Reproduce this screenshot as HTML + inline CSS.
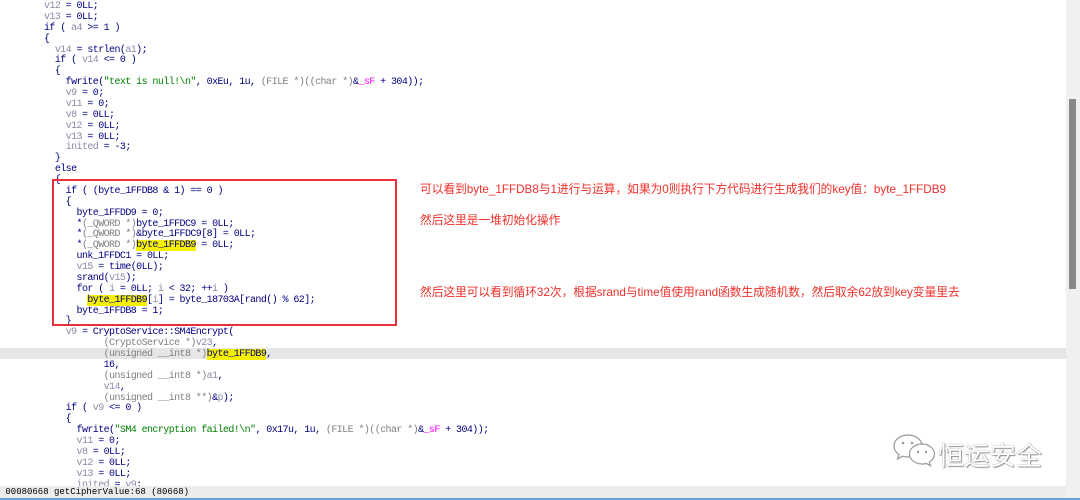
<!DOCTYPE html>
<html><head><meta charset="utf-8"><style>
body{margin:0;width:1080px;height:500px;overflow:hidden;background:#fff;position:relative;font-family:"Liberation Mono",monospace;}
#code{position:absolute;left:44px;top:2px;font-size:10px;letter-spacing:-0.58px;line-height:10.87px;white-space:pre;color:#000080;}
.v{color:#8a8aa8}.s{color:#008000}.g{color:#808080}.p{color:#ff00ff}.h{background:#f5f000}
#hl{position:absolute;left:0;top:348px;width:1066px;height:11px;background:#e6e6e6}
#box{position:absolute;left:52px;top:179px;width:341px;height:143px;border:2px solid #e8303a}
.n{position:absolute;left:420px;color:#f0302a;font-family:"Liberation Sans","Noto Sans CJK SC",sans-serif;font-size:11.7px}
#sb{position:absolute;left:1066px;top:0;width:14px;height:500px;background:#f0f0f0}
#th{position:absolute;left:1069px;top:99px;width:7px;height:190px;background:#888}
#st{position:absolute;left:0;top:486px;width:1066px;height:13px;background:#ececec;font-size:9px;line-height:13px;color:#000;white-space:pre}
#bl{position:absolute;left:0;top:498px;width:1080px;height:2px;background:#6a9fd0}
#wm{position:absolute;left:938px;top:436px;color:#fff;font-family:"Noto Sans CJK SC",sans-serif;font-size:26px;text-shadow:0 0 1px #666,1px 1px 1px #999;}
</style></head><body>
<div id="hl"></div>
<div id="code"><span class="v">v12</span> = 0LL;
<span class="v">v13</span> = 0LL;
if ( <span class="v">a4</span> &gt;= 1 )
{
  <span class="v">v14</span> = strlen(<span class="v">a1</span>);
  if ( <span class="v">v14</span> &lt;= 0 )
  {
    fwrite(<span class="s">"text is null!\n"</span>, 0xEu, 1u, <span class="g">(FILE *)((char *)</span>&amp;<span class="p">_sF</span> + 304));
    <span class="v">v9</span> = 0;
    <span class="v">v11</span> = 0;
    <span class="v">v8</span> = 0LL;
    <span class="v">v12</span> = 0LL;
    <span class="v">v13</span> = 0LL;
    <span class="v">inited</span> = -3;
  }
  else
  {
    if ( (byte_1FFDB8 &amp; 1) == 0 )
    {
      byte_1FFDD9 = 0;
      *<span class="g">(_QWORD *)</span>byte_1FFDC9 = 0LL;
      *<span class="g">(_QWORD *)</span>&amp;byte_1FFDC9[8] = 0LL;
      *<span class="g">(_QWORD *)</span><span class="h">byte_1FFDB9</span> = 0LL;
      unk_1FFDC1 = 0LL;
      <span class="v">v15</span> = time(0LL);
      srand(<span class="v">v15</span>);
      for ( <span class="v">i</span> = 0LL; <span class="v">i</span> &lt; 32; ++<span class="v">i</span> )
        <span class="h">byte_1FFDB9</span>[<span class="v">i</span>] = byte_18703A[rand() % 62];
      byte_1FFDB8 = 1;
    }
    <span class="v">v9</span> = CryptoService::SM4Encrypt(
           <span class="g">(CryptoService *)</span><span class="v">v23</span>,
           <span class="g">(unsigned __int8 *)</span><span class="h">byte_1FFDB9</span>,
           16,
           <span class="g">(unsigned __int8 *)</span><span class="v">a1</span>,
           <span class="v">v14</span>,
           <span class="g">(unsigned __int8 **)</span>&amp;<span class="v">p</span>);
    if ( <span class="v">v9</span> &lt;= 0 )
    {
      fwrite(<span class="s">"SM4 encryption failed!\n"</span>, 0x17u, 1u, <span class="g">(FILE *)((char *)</span>&amp;<span class="p">_sF</span> + 304));
      <span class="v">v11</span> = 0;
      <span class="v">v8</span> = 0LL;
      <span class="v">v12</span> = 0LL;
      <span class="v">v13</span> = 0LL;
      <span class="v">inited</span> = <span class="v">v9</span>;</div>
<div id="box"></div>
<div class="n" style="top:180px">可以看到byte_1FFDB8与1进行与运算，如果为0则执行下方代码进行生成我们的key值：byte_1FFDB9</div>
<div class="n" style="top:211px">然后这里是一堆初始化操作</div>
<div class="n" style="top:283px">然后这里可以看到循环32次，根据srand与time值使用rand函数生成随机数，然后取余62放到key变量里去</div>
<div id="sb"></div><div id="th"></div>
<svg style="position:absolute;left:892px;top:432px" width="46" height="38" viewBox="0 0 46 38">
<g fill="#fff" stroke="#999" stroke-width="1.2">
<path d="M16 3C8 3 2 8 2 14c0 3.5 2 6.5 5 8.5l-1.5 4.5 5-2.8c1.8.5 3.6.8 5.5.8 8 0 14-5 14-11S24 3 16 3z"/>
<path d="M30 12c-7 0-12.5 4.5-12.5 10s5.5 10 12.5 10c1.5 0 3-.2 4.3-.6l4.2 2.4-1.2-3.8c3-1.8 5.2-4.8 5.2-8 0-5.5-5.5-10-12.5-10z"/>
</g>
<g fill="#999"><circle cx="11" cy="11" r="1.3"/><circle cx="20" cy="11" r="1.3"/><circle cx="26" cy="20" r="1.2"/><circle cx="34" cy="20" r="1.2"/></g>
</svg>
<div id="wm">恒运安全</div>
<div id="st"> 00080668 getCipherValue:68 (80668)</div>
<div id="bl"></div>
</body></html>
